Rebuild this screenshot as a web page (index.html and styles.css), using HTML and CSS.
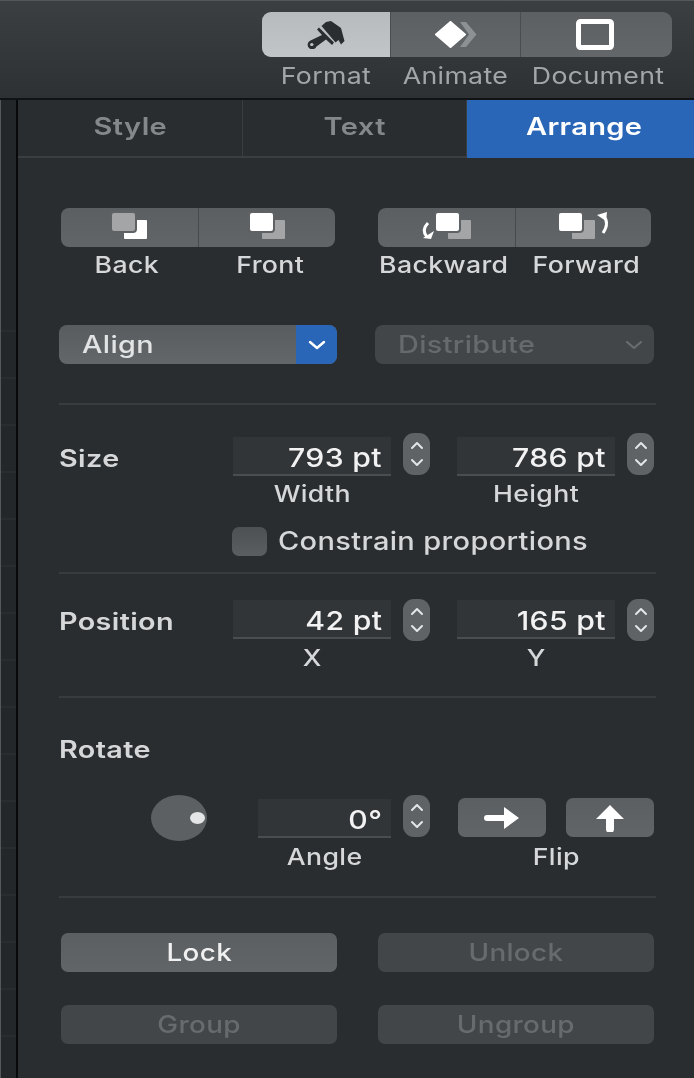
FILE: index.html
```html
<!DOCTYPE html>
<html lang="en">
<head>
<meta charset="utf-8">
<title>Arrange inspector</title>
<link rel="stylesheet" href="styles.css">
</head>
<body>
<div class="app">
  <header class="toolbar">
    <div class="modes">
      <div class="mode-seg mode-active">
        <svg width="39" height="28" viewBox="0 0 39 28"><path fill="#2b2e31" d="M14.5 5 L19 1 L24 0 L34 7 L37.5 20 L34 23.5 L31.5 19 L28.5 21.5 Z"/><path fill="#2b2e31" d="M10 8.5 L12 6.5 L27 21.5 L25 24 L19 18.5 L9.5 25.5 A4.6 4.6 0 1 1 3.5 19.5 L15 14 Z"/><ellipse cx="4.8" cy="23.6" rx="1.7" ry="1.5" fill="#bfc2c4"/></svg>
      </div>
      <div class="mode-seg">
        <svg width="42" height="27" viewBox="0 0 42 27"><path fill="#8e9193" d="M25 1 L31 1 L41.5 13.5 L31 26 L25 26 L34 13.5 Z"/><path fill="#fff" stroke="#fff" stroke-width="2" stroke-linejoin="round" d="M15.5 1 L30 13.5 L15.5 26 L1 13.5 Z"/></svg>
      </div>
      <div class="mode-seg mode-doc">
        <svg width="38" height="31" viewBox="0 0 38 31"><rect x="2.5" y="2.5" width="33" height="26" rx="2" fill="none" stroke="#fff" stroke-width="5"/></svg>
      </div>
    </div>
    <div class="mode-labels">
      <span><span class="tx">Format</span></span><span><span class="tx">Animate</span></span><span><span class="tx">Document</span></span>
    </div>
  </header>

  <div class="workspace">
    <aside class="canvas-edge"></aside>
    <main class="panel">
      <nav class="tabs">
        <div class="tab"><span class="tx tx-tab">Style</span></div>
        <div class="tab"><span class="tx tx-tab">Text</span></div>
        <div class="tab tab-on"><span class="tx tx-tab">Arrange</span></div>
      </nav>

      <div class="content">
        <section class="order">
          <div class="order-group">
            <div class="seg-bar">
              <div class="seg"><svg width="36" height="28" viewBox="0 0 36 28"><rect x="12" y="8" width="23" height="19" rx="1" fill="#fff"/><rect x="-1" y="0" width="25" height="20" rx="3" fill="#a3a5a7" stroke="#5e6264" stroke-width="2"/></svg></div>
              <div class="seg"><svg width="36" height="28" viewBox="0 0 36 28"><rect x="13" y="8" width="23" height="19" rx="1" fill="#a3a5a7"/><rect x="0" y="0" width="25" height="20" rx="3" fill="#fff" stroke="#5e6264" stroke-width="2"/></svg></div>
            </div>
            <div class="seg-labels"><span class="shift-l"><span class="tx">Back</span></span><span class="shift-r"><span class="tx">Front</span></span></div>
          </div>
          <div class="order-group order-right">
            <div class="seg-bar">
              <div class="seg"><svg width="52" height="28" viewBox="0 0 52 28"><rect x="28" y="8" width="23" height="19" rx="1" fill="#a3a5a7"/><rect x="15" y="0" width="25" height="20" rx="3" fill="#fff" stroke="#5e6264" stroke-width="2"/><path d="M8 11 Q1 18 7 25" fill="none" stroke="#fff" stroke-width="3"/><path d="M14 19 L11 27 L3 26 Z" fill="#fff"/></svg></div>
              <div class="seg"><svg width="52" height="28" viewBox="0 0 52 28"><rect x="15" y="8" width="23" height="19" rx="1" fill="#a3a5a7"/><rect x="1" y="0" width="25" height="20" rx="3" fill="#fff" stroke="#5e6264" stroke-width="2"/><path d="M46 3 Q53 11 46 21" fill="none" stroke="#fff" stroke-width="3"/><path d="M40 3 L50 0 L49 9 Z" fill="#fff"/></svg></div>
            </div>
            <div class="seg-labels"><span class="shift-l"><span class="tx">Backward</span></span><span class="shift-r"><span class="tx">Forward</span></span></div>
          </div>
        </section>

        <section class="selects">
          <div class="select">
            <span class="select-text"><span class="tx tx-left">Align</span></span>
            <span class="select-arrow"><svg width="18" height="10" viewBox="0 0 18 10"><path d="M2 2 L9 8 L16 2" fill="none" stroke="#fff" stroke-width="2.4" stroke-linecap="round" stroke-linejoin="round"/></svg></span>
          </div>
          <div class="select select-off">
            <span class="select-text"><span class="tx tx-left">Distribute</span></span>
            <span class="select-arrow"><svg width="18" height="10" viewBox="0 0 18 10"><path d="M2 2 L9 8 L16 2" fill="none" stroke="#6a6d6f" stroke-width="2.2" stroke-linecap="round" stroke-linejoin="round"/></svg></span>
          </div>
        </section>

        <section class="block block-size">
          <div class="row">
            <h2 class="row-title"><span class="tx tx-left">Size</span></h2>
            <div class="num">
              <div class="field"><span class="tx tx-right">793 pt</span></div>
              <div class="stepper"><svg width="16" height="28" viewBox="0 0 16 28"><path d="M3 8 L8 3 L13 8 M3 20 L8 25 L13 20" fill="none" stroke="#e4e5e6" stroke-width="2" stroke-linecap="round" stroke-linejoin="round"/></svg></div>
              <div class="caption"><span class="tx">Width</span></div>
            </div>
            <div class="num">
              <div class="field"><span class="tx tx-right">786 pt</span></div>
              <div class="stepper"><svg width="16" height="28" viewBox="0 0 16 28"><path d="M3 8 L8 3 L13 8 M3 20 L8 25 L13 20" fill="none" stroke="#e4e5e6" stroke-width="2" stroke-linecap="round" stroke-linejoin="round"/></svg></div>
              <div class="caption"><span class="tx">Height</span></div>
            </div>
          </div>
          <label class="check"><span class="check-box"></span><span class="tx tx-left">Constrain proportions</span></label>
        </section>

        <section class="block block-pos">
          <div class="row">
            <h2 class="row-title"><span class="tx tx-left">Position</span></h2>
            <div class="num">
              <div class="field"><span class="tx tx-right">42 pt</span></div>
              <div class="stepper"><svg width="16" height="28" viewBox="0 0 16 28"><path d="M3 8 L8 3 L13 8 M3 20 L8 25 L13 20" fill="none" stroke="#e4e5e6" stroke-width="2" stroke-linecap="round" stroke-linejoin="round"/></svg></div>
              <div class="caption"><span class="tx">X</span></div>
            </div>
            <div class="num">
              <div class="field"><span class="tx tx-right">165 pt</span></div>
              <div class="stepper"><svg width="16" height="28" viewBox="0 0 16 28"><path d="M3 8 L8 3 L13 8 M3 20 L8 25 L13 20" fill="none" stroke="#e4e5e6" stroke-width="2" stroke-linecap="round" stroke-linejoin="round"/></svg></div>
              <div class="caption"><span class="tx">Y</span></div>
            </div>
          </div>
        </section>

        <section class="block block-rot">
          <h2 class="row-title rot-title"><span class="tx tx-left">Rotate</span></h2>
          <div class="rot-row">
            <div class="dial"><span class="dial-dot"></span></div>
            <div class="num num-angle">
              <div class="field"><span class="tx tx-right">0°</span></div>
              <div class="stepper"><svg width="16" height="28" viewBox="0 0 16 28"><path d="M3 8 L8 3 L13 8 M3 20 L8 25 L13 20" fill="none" stroke="#e4e5e6" stroke-width="2" stroke-linecap="round" stroke-linejoin="round"/></svg></div>
              <div class="caption"><span class="tx">Angle</span></div>
            </div>
            <div class="flip">
              <div class="flip-btns">
                <div class="btn"><svg width="36" height="26" viewBox="0 0 36 26"><path d="M3 10 H20 V2 L35 13 L20 24 V16 H3 A3 3 0 0 1 3 10 Z" fill="#fff"/></svg></div>
                <div class="btn"><svg width="30" height="28" viewBox="0 0 30 28"><path d="M15 1 L29 15 H19 V25 A3 3 0 0 1 11 25 V15 H1 Z" fill="#fff"/></svg></div>
              </div>
              <div class="caption"><span class="tx">Flip</span></div>
            </div>
          </div>
        </section>

        <section class="block block-lock">
          <div class="lock-grid">
            <div class="btn btn-wide"><span class="tx">Lock</span></div>
            <div class="btn btn-wide btn-off"><span class="tx">Unlock</span></div>
            <div class="btn btn-wide btn-off"><span class="tx">Group</span></div>
            <div class="btn btn-wide btn-off"><span class="tx">Ungroup</span></div>
          </div>
        </section>
      </div>
    </main>
  </div>
</div>
</body>
</html>
```
FILE: styles.css
```css
* { box-sizing: border-box; }
html, body { margin: 0; padding: 0; background: #2a2d30; }
body {
  width: 694px;
  height: 1078px;
  overflow: hidden;
  font-family: Inter, "Liberation Sans", sans-serif;
  font-size: 23px;
  font-weight: 500;
  letter-spacing: 0.3px;
  color: #d6d7d8;
}
.app { width: 694px; height: 1078px; display: flex; flex-direction: column; filter: blur(0.6px); }

/* the source capture is stretched horizontally */
.tx { display: inline-block; white-space: nowrap; transform: scaleX(1.16); transform-origin: center; }
.tx-left { transform-origin: left center; }
.tx-right { transform-origin: right center; }
.tx-tab { transform: scaleX(1.21); }
.row-title .tx, .select-text .tx { transform: scaleX(1.2); }

/* toolbar */
.toolbar {
  height: 100px;
  flex: none;
  padding: 12px 22px 0 262px;
  background: linear-gradient(180deg, #3b3f42 0%, #2e3134 100%);
  border-bottom: 2px solid #101214;
  border-top: 1px solid #55585a;
}
.modes {
  display: grid;
  grid-template-columns: 128px 130px 152px;
  height: 45px;
  margin-top: -1px;
  border-radius: 9px;
  overflow: hidden;
  background: linear-gradient(180deg, #5c6062, #63676a);
}
.mode-seg { display: flex; align-items: center; justify-content: center; border-left: 1px solid #4a4d50; }
.mode-active { background: linear-gradient(180deg, #b8bbbd, #c2c5c7); border-left: 0; }
.mode-doc { padding-right: 4px; }
.mode-labels {
  display: grid;
  grid-template-columns: 128px 130px 152px;
  margin-top: 7px;
  text-align: center;
  line-height: 24px;
  font-weight: 400;
  color: #a3a6a8;
}
.mode-labels > span:last-child { padding-left: 5px; }

/* body split */
.workspace { flex: 1; display: flex; min-height: 0; }
.canvas-edge {
  width: 18px;
  flex: none;
  background:
    linear-gradient(90deg, #56595b 0 1px, transparent 1px),
    repeating-linear-gradient(180deg, #292d2f 0 2px, transparent 2px 47px) 0 230px no-repeat,
    #23272a;
  border-right: 2px solid #08090a;
}
.panel { flex: 1; min-width: 0; display: flex; flex-direction: column; background: #2a2d30; }

/* tabs */
.tabs {
  display: grid;
  grid-template-columns: 225px 224px 227px;
  height: 58px;
  border-bottom: 2px solid #3b3e41;
  flex: none;
}
.tab {
  display: flex;
  align-items: center;
  justify-content: center;
  padding-bottom: 4px;
  font-size: 24px;
  font-weight: 600;
  color: #85888a;
  border-right: 1px solid #3b3e41;
}
.tab-on { background: #2a66b8; color: #fff; border-right: 0; margin-bottom: -2px; padding: 0 0 6px 7px; }

.content { padding: 50px 38px 0 41px; }

/* order buttons */
.order { display: flex; padding-left: 2px; }
.order-group { width: 274px; }
.order-right { margin-left: 43px; width: 273px; }
.seg-bar {
  display: grid;
  grid-template-columns: 1fr 1fr;
  height: 39px;
  border-radius: 8px;
  overflow: hidden;
  background: linear-gradient(180deg, #5b5f61, #616567);
}
.seg { display: flex; align-items: flex-start; justify-content: center; padding-top: 4px; }
.seg + .seg { border-left: 1px solid #47494c; }
.seg svg { overflow: visible; }
.seg-labels {
  display: grid;
  grid-template-columns: 1fr 1fr;
  margin-top: 6px;
  line-height: 24px;
  text-align: center;
}
.shift-l { padding-right: 6px; }
.shift-r { padding-left: 8px; }

/* selects */
.selects { display: flex; margin-top: 48px; gap: 38px; }
.select {
  width: 278px;
  height: 39px;
  display: flex;
  align-items: center;
  justify-content: space-between;
  border-radius: 8px;
  overflow: hidden;
  background: linear-gradient(180deg, #585c5e, #636769);
}
.select-text { padding-left: 23px; font-size: 24px; color: #e2e3e4; }
.select-arrow {
  width: 41px;
  height: 100%;
  display: flex;
  align-items: center;
  justify-content: center;
  background: #2a66b8;
}
.select-off { width: 279px; background: #434648; }
.select-off .select-text { color: #666a6c; }
.select-off .select-arrow { background: none; }

/* sections */
.block { border-top: 2px solid #393c3f; }
.block-size { margin-top: 39px; padding-top: 28px; height: 169px; }
.block-pos { padding-top: 25px; height: 124px; }
.block-rot { padding-top: 40px; height: 200px; }
.block-lock { padding: 35px 0 0 2px; }

.row { display: flex; align-items: flex-start; }
.row-title {
  margin: 0;
  width: 174px;
  font-size: 24px;
  font-weight: 600;
  line-height: 28px;
  padding-top: 12px;
  color: #d6d7d8;
}
.block-pos .row-title { padding-top: 9px; }
.rot-title { padding-top: 0; line-height: 24px; }

.num { display: grid; grid-template-columns: 158px 27px; column-gap: 12px; width: 197px; }
.num + .num { margin-left: 27px; }
.field {
  height: 39px;
  margin-top: 4px;
  padding-right: 9px;
  text-align: right;
  font-size: 26px;
  line-height: 42px;
  color: #f2f2f3;
  background: #323538;
  border-bottom: 2px solid #4b4e50;
}
.block-pos .field { margin-top: 1px; }
.stepper {
  height: 42px;
  border-radius: 11px;
  display: flex;
  align-items: center;
  justify-content: center;
  background: #5f6366;
}
.caption {
  grid-column: 1;
  margin-top: 6px;
  line-height: 24px;
  text-align: center;
}
.block-pos .caption { margin-top: 5px; }

.check { display: flex; align-items: center; margin: 20px 0 0 173px; gap: 11px; font-size: 25px; }
.check-box { width: 35px; height: 29px; border-radius: 7px; background: linear-gradient(180deg, #4d5153, #5a5e60); }

/* rotate */
.rot-row { display: flex; align-items: flex-start; padding-left: 92px; margin-top: 33px; }
.dial {
  position: relative;
  width: 56px;
  height: 46px;
  flex: none;
  border-radius: 50%;
  background: #5c6062;
}
.dial-dot {
  position: absolute;
  right: 2px;
  top: 17px;
  width: 15px;
  height: 12px;
  border-radius: 50%;
  background: #e4e5e6;
}
.num-angle { margin-left: 51px; grid-template-columns: 133px 27px; width: 172px; }
.num-angle .caption { margin-top: 7px; }
.flip { margin-left: 28px; width: 196px; padding-top: 3px; }
.flip-btns { display: flex; gap: 20px; }
.flip .caption { margin-top: 8px; }
.btn {
  flex: 1;
  height: 39px;
  display: flex;
  align-items: center;
  justify-content: center;
  border-radius: 7px;
  background: linear-gradient(180deg, #5b5f61, #616567);
}

/* lock */
.lock-grid { display: grid; grid-template-columns: 276px 276px; column-gap: 41px; row-gap: 33px; }
.btn-wide { font-size: 24px; color: #f0f0f1; }
.btn-off { background: #434648; color: #686b6d; }
```
